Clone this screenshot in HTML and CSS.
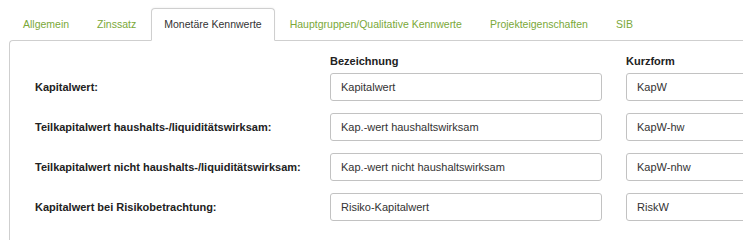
FILE: index.html
```html
<!DOCTYPE html>
<html>
<head lang="de">
    <meta charset="UTF-8">
    <title>Monetäre Kennwerte</title>
    <link rel="stylesheet" href="styles.css">
</head>
<body>
<ul class="tabs">
    <li><a href="#">Allgemein</a></li>
    <li><a href="#">Zinssatz</a></li>
    <li><a href="#" class="active">Monetäre Kennwerte</a></li>
    <li><a href="#">Hauptgruppen/Qualitative Kennwerte</a></li>
    <li><a href="#">Projekteigenschaften</a></li>
    <li><a href="#">SIB</a></li>
</ul>
<div class="panel">
    <div class="row head">
        <span></span>
        <span>Bezeichnung</span>
        <span>Kurzform</span>
    </div>
    <div class="fields">
        <div class="row">
            <label>Kapitalwert:</label>
            <input type="text" value="Kapitalwert">
            <input type="text" value="KapW">
        </div>
        <div class="row">
            <label>Teilkapitalwert haushalts-/liquiditätswirksam:</label>
            <input type="text" value="Kap.-wert haushaltswirksam">
            <input type="text" value="KapW-hw">
        </div>
        <div class="row">
            <label>Teilkapitalwert nicht haushalts-/liquiditätswirksam:</label>
            <input type="text" value="Kap.-wert nicht haushaltswirksam">
            <input type="text" value="KapW-nhw">
        </div>
        <div class="row">
            <label>Kapitalwert bei Risikobetrachtung:</label>
            <input type="text" value="Risiko-Kapitalwert">
            <input type="text" value="RiskW">
        </div>
    </div>
</div>
</body>
</html>
```

FILE: styles.css
```css
* {
    box-sizing: border-box;
}

body {
    margin: 0;
    overflow: hidden;
    background: #fff;
    font-family: "Liberation Sans", Arial, sans-serif;
    font-size: 11px;
    color: #222;
}

.tabs {
    display: flex;
    margin: 0 0 0 10px;
    padding: 8px 0 0;
    list-style: none;
}

.tabs a {
    display: block;
    margin: 0 2px -1px 0;
    padding: 0 12px;
    line-height: 31px;
    font-size: 10.5px;
    color: #7aa838;
    text-decoration: none;
    border: 1px solid transparent;
    border-radius: 4px 4px 0 0;
}

.tabs a.active {
    position: relative;
    color: #333;
    background: #fff;
    border-color: #cfcfcf;
    border-bottom-color: #fff;
    box-shadow: 0 -1px 2px rgba(0, 0, 0, 0.04);
}

.panel {
    margin-left: 9px;
    height: 200px;
    overflow: hidden;
    padding: 12px 0 0 25px;
    border-top: 1px solid #cfcfcf;
    border-left: 1px solid #cfcfcf;
    border-top-left-radius: 4px;
}

.row {
    display: grid;
    grid-template-columns: 271px 272px 150px;
    column-gap: 24px;
    align-items: center;
}

.head {
    height: 16px;
    margin-bottom: 4px;
    font-weight: bold;
}

.fields {
    display: flex;
    flex-direction: column;
    gap: 12px;
}

.row label {
    font-weight: bold;
    color: #222;
}

.row input {
    height: 28px;
    margin: 0;
    padding: 0 10px;
    font-family: inherit;
    font-size: 11px;
    color: #333;
    background: #fff;
    border: 1px solid #c2c2c2;
    border-radius: 3px;
}
```
